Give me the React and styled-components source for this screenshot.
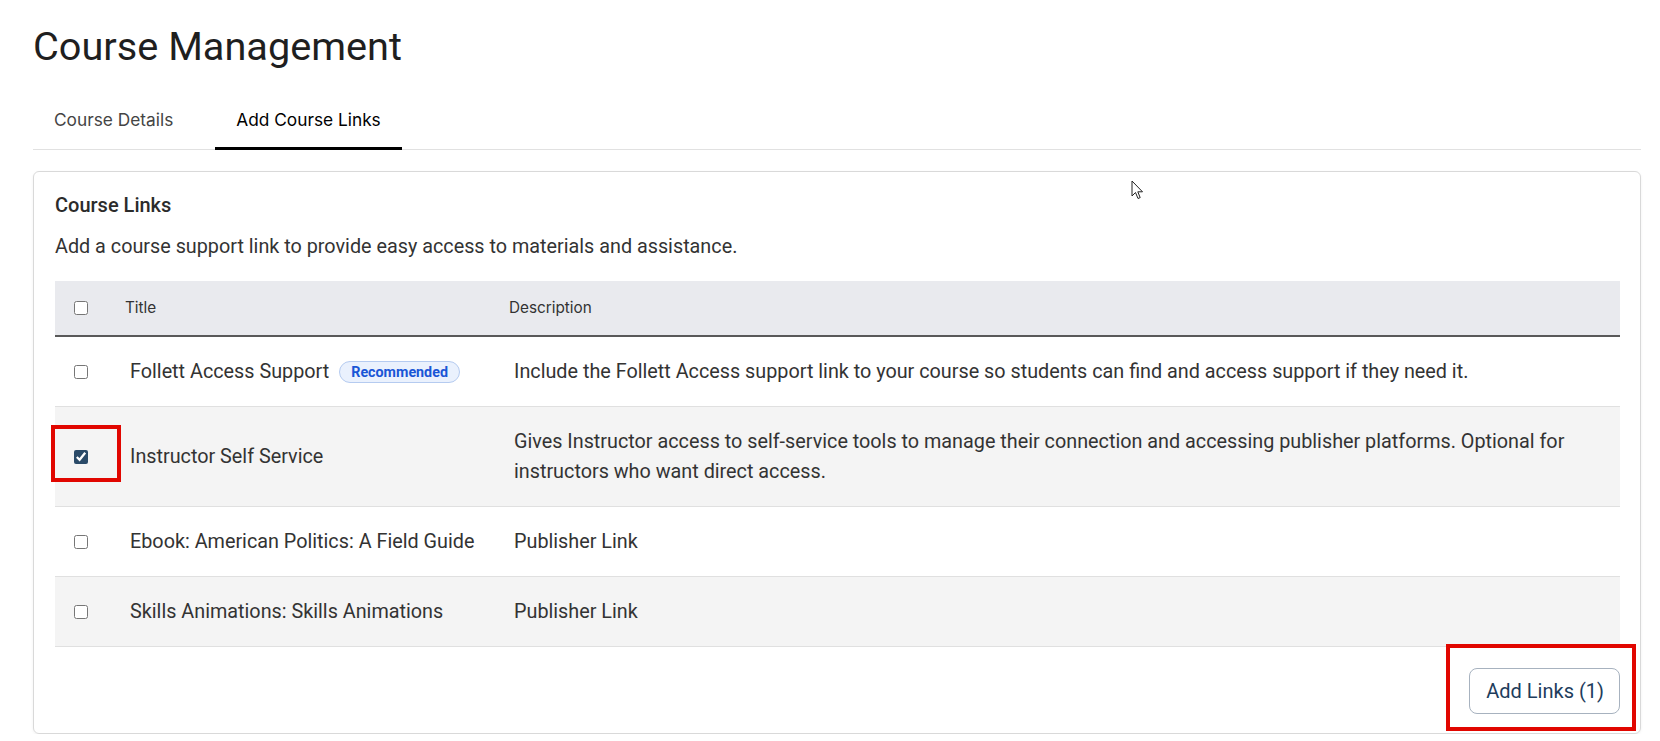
import React from 'react'
import styled, { createGlobalStyle } from 'styled-components'

const GlobalStyle = createGlobalStyle`
  * {
    box-sizing: border-box;
  }
  body {
    margin: 0;
    background: #fff;
    color: #333;
    font-family: Roboto, "Liberation Sans", sans-serif;
  }
`

const Page = styled.main`
  padding: 23px 19px 0 33px;
`

const Heading = styled.h1`
  margin: 0;
  font-size: 39.7px;
  line-height: 48px;
  font-weight: 400;
  color: #1f1f1f;
`

const TabList = styled.nav`
  display: flex;
  gap: 21px;
  margin-top: 22px;
  border-bottom: 1px solid #e1e1e1;
`

const Tab = styled.button`
  margin-bottom: -1px;
  padding: 15px 21px;
  background: none;
  border: 0;
  border-bottom: 3px solid ${(p) => (p.$active ? '#000' : 'transparent')};
  font-family: Inter, "Liberation Sans", sans-serif;
  font-size: 17.3px;
  line-height: 24px;
  font-weight: 400;
  color: ${(p) => (p.$active ? '#000' : '#444')};
  cursor: pointer;
`

const Card = styled.section`
  position: relative;
  margin-top: 21px;
  padding: 20px 20px 19px 21px;
  border: 1px solid #d9d9d9;
  border-radius: 6px;
  box-shadow: 0 1px 3px rgba(0, 0, 0, 0.06);
`

const CardTitle = styled.h2`
  margin: 0;
  font-size: 20px;
  line-height: 26px;
  font-weight: 500;
  color: #2b2b2b;
`

const Intro = styled.p`
  margin: 14px 0 0;
  font-size: 19.8px;
  line-height: 30px;
`

const Table = styled.table`
  width: 100%;
  margin-top: 19px;
  border-collapse: separate;
  border-spacing: 0;
  table-layout: fixed;
`

const HeadCell = styled.th`
  padding: 17px 0 17px ${(p) => p.$pad || 0}px;
  background: #e9eaee;
  border-bottom: 2px solid #595959;
  font-family: Inter, "Liberation Sans", sans-serif;
  font-size: 15.3px;
  line-height: 20px;
  font-weight: 400;
  color: #333;
  text-align: left;
`

const Row = styled.tr`
  background: ${(p) => (p.$shaded ? '#f4f4f4' : '#fff')};
`

const Cell = styled.td`
  position: relative;
  padding: 19.5px ${(p) => p.$right || 0}px 19.5px ${(p) => p.$pad || 0}px;
  border-bottom: 1px solid #e0e0e0;
  font-size: 19.8px;
  line-height: 30px;
  color: #333;
  vertical-align: middle;
`

const CheckWrap = styled.span`
  display: flex;
  align-items: center;
  height: ${(p) => p.$h || 30}px;
`

const Check = styled.input.attrs({ type: 'checkbox' })`
  width: 14px;
  height: 14px;
  margin: 0;
  accent-color: #2a4a68;
`

const Badge = styled.span`
  display: inline-block;
  margin-left: 10px;
  padding: 0 11px;
  border: 1px solid #b5cbf0;
  border-radius: 999px;
  background: #eaf1fd;
  color: #1a56d6;
  font-size: 14.3px;
  line-height: 20px;
  font-weight: 700;
  vertical-align: 1px;
`

const Footer = styled.div`
  display: flex;
  justify-content: flex-end;
  margin-top: 21px;
`

const Marked = styled.span`
  position: relative;
  display: inline-flex;
`

const Button = styled.button`
  padding: 9.5px 15px 9.5px 16px;
  border: 1px solid #a7b2bf;
  border-radius: 8px;
  background: #fff;
  color: #1e3d5c;
  font-family: Roboto, "Liberation Sans", sans-serif;
  font-size: 20px;
  line-height: 25px;
  cursor: pointer;
`

const RedFrame = styled.span`
  position: absolute;
  top: ${(p) => p.$top}px;
  left: ${(p) => p.$left}px;
  width: ${(p) => p.$w}px;
  height: ${(p) => p.$h}px;
  border: 4px solid #e10600;
  pointer-events: none;
`

const Pointer = styled.svg`
  position: absolute;
  top: 8px;
  left: 1097px;
`

const links = [
  {
    title: 'Follett Access Support',
    badge: 'Recommended',
    description:
      'Include the Follett Access support link to your course so students can find and access support if they need it.',
  },
  {
    title: 'Instructor Self Service',
    checked: true,
    description:
      'Gives Instructor access to self-service tools to manage their connection and accessing publisher platforms. Optional for instructors who want direct access.',
  },
  { title: 'Ebook: American Politics: A Field Guide', description: 'Publisher Link' },
  { title: 'Skills Animations: Skills Animations', description: 'Publisher Link' },
]

export default function App() {
  const selected = links.filter((l) => l.checked).length

  return (
    <Page>
      <GlobalStyle />
      <Heading>Course Management</Heading>
      <TabList>
        <Tab>Course Details</Tab>
        <Tab $active>Add Course Links</Tab>
      </TabList>

      <Card>
        <Pointer width="13" height="20" viewBox="0 0 13 20">
          <path
            d="M1 1 L1 16 L4.5 12.5 L7 18.5 L9.2 17.6 L6.8 11.8 L11.5 11.8 Z"
            fill="#fff"
            stroke="#222"
            strokeWidth="1"
            strokeLinejoin="round"
          />
        </Pointer>
        <CardTitle>Course Links</CardTitle>
        <Intro>Add a course support link to provide easy access to materials and assistance.</Intro>

        <Table>
          <colgroup>
            <col style={{ width: 70 }} />
            <col style={{ width: 384 }} />
            <col />
          </colgroup>
          <thead>
            <tr>
              <HeadCell $pad={19}>
                <CheckWrap $h={20}>
                  <Check />
                </CheckWrap>
              </HeadCell>
              <HeadCell>Title</HeadCell>
              <HeadCell>Description</HeadCell>
            </tr>
          </thead>
          <tbody>
            {links.map((link, i) => (
              <Row key={link.title} $shaded={i % 2 === 1}>
                <Cell $pad={19}>
                  <CheckWrap>
                    <Check defaultChecked={link.checked} />
                  </CheckWrap>
                  {link.checked && <RedFrame $top={18} $left={-4} $w={70} $h={57} />}
                </Cell>
                <Cell $pad={5}>
                  {link.title}
                  {link.badge && <Badge>{link.badge}</Badge>}
                </Cell>
                <Cell $pad={5} $right={20}>
                  {link.description}
                </Cell>
              </Row>
            ))}
          </tbody>
        </Table>

        <Footer>
          <Marked>
            <Button>Add Links ({selected})</Button>
            <RedFrame $top={-24} $left={-23} $w={190} $h={87} />
          </Marked>
        </Footer>
      </Card>
    </Page>
  )
}
